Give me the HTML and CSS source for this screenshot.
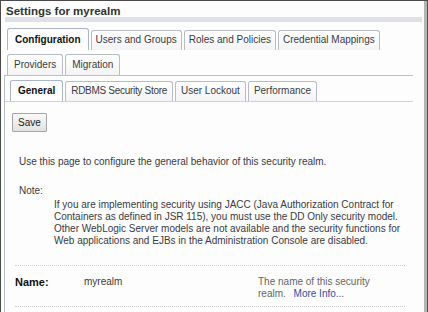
FILE: index.html
```html
<!DOCTYPE html>
<html lang="en">
<head>
  <meta charset="UTF-8">
  <title>Settings for myrealm</title>
  <link rel="stylesheet" href="styles.css">
</head>
<body>
<div class="frame">
  <div class="panel">
    <h1 class="panel__title">Settings for myrealm</h1>
    <div class="panel__band"></div>

    <div class="tabs">
      <div class="tabs__row tabs__row--first">
        <span class="tab tab--active">Configuration</span>
        <span class="tab">Users and Groups</span>
        <span class="tab">Roles and Policies</span>
        <span class="tab">Credential Mappings</span>
      </div>
      <div class="tabs__row tabs__row--second">
        <span class="tab">Providers</span>
        <span class="tab">Migration</span>
      </div>
    </div>

    <div class="content">
      <div class="subtabs">
        <span class="tab tab--sub tab--active">General</span>
        <span class="tab tab--sub tab--tight">RDBMS Security Store</span>
        <span class="tab tab--sub">User Lockout</span>
        <span class="tab tab--sub">Performance</span>
      </div>

      <div class="body">
        <button class="save">Save</button>

        <p class="intro">Use this page to configure the general behavior of this security realm.</p>

        <p class="note__label">Note:</p>
        <p class="note__text">If you are implementing security using JACC (Java Authorization Contract for<br>
          Containers as defined in JSR 115), you must use the DD Only security model.<br>
          Other WebLogic Server models are not available and the security functions for<br>
          Web applications and EJBs in the Administration Console are disabled.</p>

        <div class="field">
          <span class="field__label">Name:</span>
          <span class="field__value">myrealm</span>
          <span class="field__help">The name of this security<br>realm. <a class="field__more" href="#">More Info...</a></span>
        </div>
      </div>
    </div>
  </div>
</div>
</body>
</html>
```

FILE: styles.css
```css
* {
  margin: 0;
  padding: 0;
  box-sizing: border-box;
}

:root {
  --color-text: #3a3a44;
  --color-tab-border: #b9bcc6;
  --color-rule: #b7c0d6;
  --color-link: #2c4fa8;
}

body {
  width: 428px;
  height: 312px;
  overflow: hidden;
  font-family: "Liberation Sans", Arial, sans-serif;
  font-size: 10px;
  color: var(--color-text);
  background: #fdfdfd;
}

.frame {
  height: 312px;
  border-top: 1px solid #4a4a4a;
  border-left: 1px solid #4a4a4a;
  border-right: 1px solid #555555;
  box-shadow: inset -3px 0 0 #b4b4b4;
  padding: 5px 5px 0 3px;
}

.panel__title {
  font-size: 11.5px;
  font-weight: bold;
  color: #333;
  padding-left: 2px;
  line-height: 11px;
}

.panel__band {
  height: 5px;
  margin-left: 1px;
  background: #e0e1e8;
}

.tabs {
  padding: 6px 0 0 3px;
}

.tabs__row {
  display: flex;
  gap: 2px;
  height: 22px;
  align-items: flex-end;
}

.tabs__row--second {
  margin-top: 4px;
  height: 21px;
}

.tab {
  display: block;
  height: 20px;
  line-height: 18px;
  padding: 0 6px;
  border: 1px solid var(--color-tab-border);
  border-bottom: none;
  border-radius: 3px 3px 0 0;
  background: linear-gradient(#ffffff, #f4f4f6);
  white-space: nowrap;
}

.tabs__row--first .tab {
  padding: 0 4px;
}

.tabs__row--second .tab {
  height: 21px;
  line-height: 19px;
}

.tabs__row--first .tab--active {
  height: 22px;
  line-height: 21px;
  padding: 0 7px;
}

.tab--active {
  font-weight: bold;
  color: #111;
  border-color: #aab4cc;
  background: #fdfdfd;
}

.content {
  margin-right: 9px;
  border-top: 1px solid var(--color-rule);
  border-left: 1px solid var(--color-rule);
  height: 240px;
}

.subtabs {
  display: flex;
  gap: 2px;
  align-items: flex-end;
  height: 26px;
  padding-left: 5px;
  border-bottom: 1px solid #cdd2de;
}

.tab--sub {
  height: 20px;
  padding: 0 5px;
}

.tab--tight {
  letter-spacing: -0.3px;
}

.tab--sub.tab--active {
  height: 21px;
  line-height: 20px;
  padding: 0 7px;
}

.body {
  padding: 11px 0 0 7px;
}

.save {
  display: block;
  font-family: inherit;
  font-size: 10px;
  color: #222;
  height: 19px;
  padding: 0 5px;
  border: 1px solid #a6a6a6;
  border-radius: 1px;
  background: linear-gradient(#f9f9f9, #e2e2e2);
}

.intro {
  margin: 24px 0 0 7px;
  line-height: 12px;
}

.note__label {
  margin: 17px 0 0 7px;
  line-height: 12px;
}

.note__text {
  margin: 2px 0 0 42px;
  line-height: 12px;
  white-space: nowrap;
}

.field {
  display: flex;
  align-items: flex-start;
  margin: 18px 8px 0 3px;
  padding: 10px 0 6px;
  border-top: 1px dotted #cfcfcf;
  border-bottom: 1px dotted #cfcfcf;
  line-height: 12px;
}

.field__label {
  width: 69px;
  font-size: 11px;
  font-weight: bold;
  color: #111;
}

.field__value {
  width: 174px;
}

.field__help {
  color: #666;
}

.field__more {
  color: var(--color-link);
  text-decoration: none;
  margin-left: 5px;
}
```
